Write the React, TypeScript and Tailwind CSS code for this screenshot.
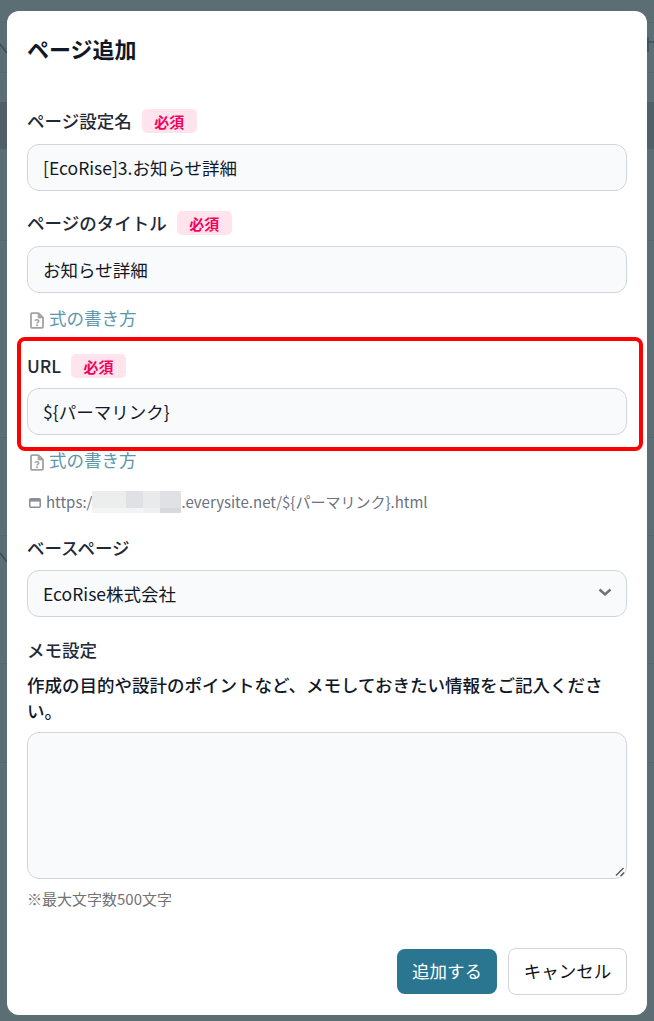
import React from "react";

function Badge() {
  return (
    <span className="inline-flex h-6 w-[55px] items-center justify-center rounded-[5px] bg-[#ffe4ee] text-[15px] font-bold leading-none text-[#f5005c]">
      必須
    </span>
  );
}

function Label({ text, badge }: { text: string; badge?: boolean }) {
  return (
    <div className="flex h-6 items-center gap-[10px] text-[17.5px] font-medium leading-6 text-[#1f2937]">
      <span className="-mt-px">{text}</span>
      {badge && <Badge />}
    </div>
  );
}

function Field({ value }: { value: string }) {
  return (
    <div className="flex h-[47px] items-center rounded-[12px] border border-[#d1d5db] bg-[#f9fafb] pl-[15px] pr-4 text-[17.5px] leading-6 text-[#111827]">
      {value}
    </div>
  );
}

function DocIcon() {
  return (
    <svg width="14" height="17" viewBox="0 0 14 17" fill="none" className="shrink-0">
      <path d="M1 2.2a1 1 0 0 1 1-1h6.5l4.5 4.5v9.1a1 1 0 0 1-1 1H2a1 1 0 0 1-1-1z" stroke="#a3a3a3" strokeWidth="1.8" strokeLinejoin="round" />
      <path d="M8.2 1.5v4.4h4.5" fill="#a3a3a3" stroke="#a3a3a3" strokeWidth="1" />
      <path d="M5 8.7c.3-1.2 3.6-1.3 3.8.4.1 1.2-1.8 1.2-1.8 2.3" stroke="#a3a3a3" strokeWidth="1.6" />
      <circle cx="7" cy="13.3" r="1" fill="#a3a3a3" />
    </svg>
  );
}

function FormulaLink({ className }: { className: string }) {
  return (
    <div className={`flex h-6 items-center gap-[5px] pl-[3px] text-[17.5px] leading-6 text-[#5b97ac] ${className}`}>
      <span className="mt-[4px] flex"><DocIcon /></span>
      <span>式の書き方</span>
    </div>
  );
}

const lines = [22, 72, 240, 437, 535, 663, 762];

export default function App() {
  return (
    <div
      className="relative h-[1021px] w-[654px] overflow-hidden bg-[#5a6e74] pt-[11px] pl-[7px]"
      style={{ fontFamily: '"Noto Sans CJK JP", "Noto Sans", sans-serif' }}
    >
      <div className="absolute inset-x-0 top-[102px] h-[47px] bg-[#4f6167]" />
      {lines.map((y) => (
        <div key={y} className="absolute inset-x-0 h-px bg-[#54676d]" style={{ top: y }} />
      ))}
      <svg width="7" height="24" viewBox="0 0 7 24" fill="none" className="absolute left-0 top-[36px]">
        <path d="M0 8 7 17" stroke="#34505e" strokeWidth="1.5" />
      </svg>
      <svg width="7" height="24" viewBox="0 0 7 24" fill="none" className="absolute left-0 top-[545px]">
        <path d="M0 8 7 17" stroke="#34505e" strokeWidth="1.5" />
      </svg>
      <svg width="7" height="16" viewBox="0 0 7 16" fill="none" className="absolute right-0 top-[37px]">
        <path d="M1 0v15M1 5h6" stroke="#34505e" strokeWidth="1.5" />
      </svg>

      <div className="relative h-[1004px] w-[640px] rounded-[12px] bg-white px-5 pt-[21px]">
        <h2 className="h-8 text-[22px] font-bold leading-8 text-[#111827]">ページ追加</h2>

        <div className="mt-[45px]">
          <Label text="ページ設定名" badge />
          <div className="mt-[11px]"><Field value="[EcoRise]3.お知らせ詳細" /></div>
        </div>

        <div className="mt-5">
          <Label text="ページのタイトル" badge />
          <div className="mt-[11px]"><Field value="お知らせ詳細" /></div>
          <FormulaLink className="mt-[13px]" />
        </div>

        <div className="mt-[24px]">
          <Label text="URL" badge />
          <div className="mt-[10px]"><Field value="${パーマリンク}" /></div>
          <FormulaLink className="mt-[13px]" />
        </div>

        <div className="mt-[18px] flex h-6 items-center text-[15px] leading-6 text-[#6b7280]">
          <svg width="12" height="10" viewBox="0 0 12 10" fill="none" className="mr-[5px] ml-[2px] mt-px shrink-0">
            <rect x=".75" y=".75" width="10.5" height="8.5" rx="1" stroke="#8a8f98" strokeWidth="1.5" />
            <rect x="1" y="1" width="10" height="2.6" fill="#8a8f98" />
          </svg>
          <span>https:/</span>
          <span className="grid h-[22px] w-[89px] shrink-0 grid-cols-[34px_17px_17px_21px] grid-rows-[17px_5px]">
            <span className="bg-[#eceded]" />
            <span className="bg-[#e0e1e5]" />
            <span className="bg-[#e9eaec]" />
            <span className="bg-[#e0e1e5]" />
            <span className="bg-[#f4f4f5]" />
            <span className="bg-[#f4f4f5]" />
            <span className="bg-[#f0f0f1]" />
            <span className="bg-[#d8d9dd]" />
          </span>
          <span>.everysite.net/${"{"}パーマリンク{"}"}.html</span>
        </div>

        <div className="mt-[22px]">
          <Label text="ベースページ" />
          <div className="relative mt-[10px]">
            <Field value="EcoRise株式会社" />
            <svg width="16" height="16" viewBox="0 0 16 16" fill="none" className="absolute right-[14px] top-[14px]">
              <path d="M2.5 5.5 8 10.5l5.5-5" stroke="#6b7280" strokeWidth="2.4" />
            </svg>
          </div>
        </div>

        <div className="mt-[21px]">
          <Label text="メモ設定" />
          <p className="mt-[10px] text-[17.5px] font-medium leading-[26px] text-[#111827]">
            作成の目的や設計のポイントなど、メモしておきたい情報をご記入ください。
          </p>
          <div className="relative mt-2 h-[147px] rounded-[12px] border border-[#d1d5db] bg-[#f9fafb]">
            <svg width="10" height="10" viewBox="0 0 10 10" fill="none" className="absolute bottom-[1px] right-[1px]">
              <path d="M1 8.5 8.5 1M5.5 9 9 5.5" stroke="#555" strokeWidth="1.3" />
            </svg>
          </div>
          <p className="mt-[10px] text-[15px] leading-5 text-[#737373]">※最大文字数500文字</p>
        </div>

        <div className="mt-[39px] flex items-center justify-end gap-[11px]">
          <button className="h-[45px] w-[100px] rounded-[8px] bg-[#2a7590] text-[17.5px] text-white">追加する</button>
          <button className="h-[47px] w-[119px] rounded-[8px] border border-[#d4d4d4] bg-white text-[17.5px] text-[#111]">キャンセル</button>
        </div>
      </div>

      <div className="absolute left-[17px] top-[337px] h-[114px] w-[626px] rounded-[8px] border-4 border-[#ff0000]" />
    </div>
  );
}
